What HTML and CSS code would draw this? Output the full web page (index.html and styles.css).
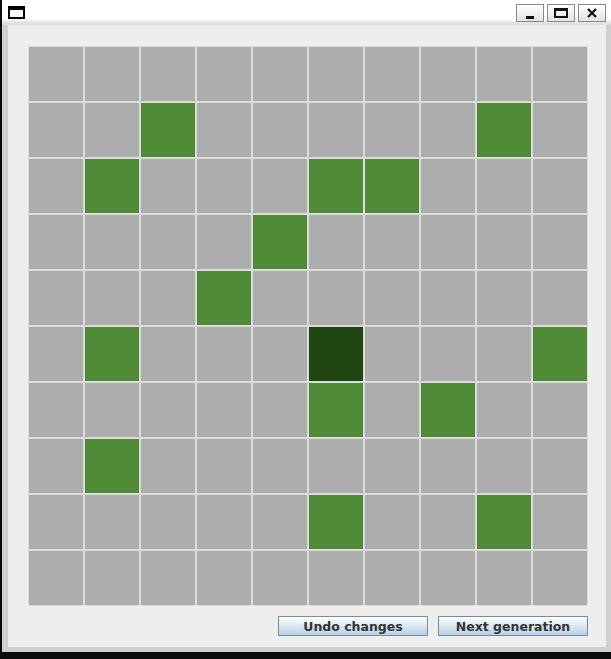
FILE: index.html
```html
<!DOCTYPE html>
<html>
    <head>
        <meta http-equiv="Content-Type" content="text/html; charset=utf-8" />
        <title>Game of Life</title>
        <link rel="stylesheet" href="styles.css">
    </head>
    <body>
        <div class="window">
            <div class="title_bar">
                <div class="win_icon"></div>
                <div class="title_buttons">
                    <div class="tb_button"><span class="ico_min"></span></div>
                    <div class="tb_button"><span class="ico_max"></span></div>
                    <div class="tb_button">
                        <svg width="10" height="10" viewBox="0 0 10 10">
                            <path d="M1 1 L9 9 M9 1 L1 9" stroke="#111" stroke-width="2.2" fill="none"/>
                        </svg>
                    </div>
                </div>
            </div>
            <div class="frame">
                <div class="panel">
                    <div class="board">
                        <!-- row 0 -->
                        <div class="cell"></div><div class="cell"></div><div class="cell"></div><div class="cell"></div><div class="cell"></div><div class="cell"></div><div class="cell"></div><div class="cell"></div><div class="cell"></div><div class="cell"></div>
                        <!-- row 1 -->
                        <div class="cell"></div><div class="cell"></div><div class="cell alive"></div><div class="cell"></div><div class="cell"></div><div class="cell"></div><div class="cell"></div><div class="cell"></div><div class="cell alive"></div><div class="cell"></div>
                        <!-- row 2 -->
                        <div class="cell"></div><div class="cell alive"></div><div class="cell"></div><div class="cell"></div><div class="cell"></div><div class="cell alive"></div><div class="cell alive"></div><div class="cell"></div><div class="cell"></div><div class="cell"></div>
                        <!-- row 3 -->
                        <div class="cell"></div><div class="cell"></div><div class="cell"></div><div class="cell"></div><div class="cell alive"></div><div class="cell"></div><div class="cell"></div><div class="cell"></div><div class="cell"></div><div class="cell"></div>
                        <!-- row 4 -->
                        <div class="cell"></div><div class="cell"></div><div class="cell"></div><div class="cell alive"></div><div class="cell"></div><div class="cell"></div><div class="cell"></div><div class="cell"></div><div class="cell"></div><div class="cell"></div>
                        <!-- row 5 -->
                        <div class="cell"></div><div class="cell alive"></div><div class="cell"></div><div class="cell"></div><div class="cell"></div><div class="cell selected"></div><div class="cell"></div><div class="cell"></div><div class="cell"></div><div class="cell alive"></div>
                        <!-- row 6 -->
                        <div class="cell"></div><div class="cell"></div><div class="cell"></div><div class="cell"></div><div class="cell"></div><div class="cell alive"></div><div class="cell"></div><div class="cell alive"></div><div class="cell"></div><div class="cell"></div>
                        <!-- row 7 -->
                        <div class="cell"></div><div class="cell alive"></div><div class="cell"></div><div class="cell"></div><div class="cell"></div><div class="cell"></div><div class="cell"></div><div class="cell"></div><div class="cell"></div><div class="cell"></div>
                        <!-- row 8 -->
                        <div class="cell"></div><div class="cell"></div><div class="cell"></div><div class="cell"></div><div class="cell"></div><div class="cell alive"></div><div class="cell"></div><div class="cell"></div><div class="cell alive"></div><div class="cell"></div>
                        <!-- row 9 -->
                        <div class="cell"></div><div class="cell"></div><div class="cell"></div><div class="cell"></div><div class="cell"></div><div class="cell"></div><div class="cell"></div><div class="cell"></div><div class="cell"></div><div class="cell"></div>
                    </div>
                    <div class="actions">
                        <button type="button" class="action_button">Undo changes</button>
                        <button type="button" class="action_button">Next generation</button>
                    </div>
                </div>
            </div>
        </div>
    </body>
</html>
```
FILE: styles.css
```css
body {
    margin: 0;
    background: #0c0c0c;
    font-family: "DejaVu Sans", sans-serif;
}
.window {
    margin-left: 2px;
    width: 609px;
    display: flex;
    flex-direction: column;
}
.title_bar {
    height: 25px;
    box-sizing: border-box;
    display: flex;
    align-items: flex-start;
    justify-content: space-between;
    padding: 4px 5px 0 6px;
    background: linear-gradient(#ffffff 0, #ffffff 76%, #e6e6e6 88%, #dadada 100%);
}
.win_icon {
    margin-top: 2px;
    width: 17px;
    height: 13px;
    box-sizing: border-box;
    border: 2px solid #000;
    border-top-width: 4px;
    background: #fff;
}
.title_buttons {
    display: flex;
    gap: 3px;
}
.tb_button {
    width: 28px;
    height: 18px;
    box-sizing: border-box;
    border: 1px solid #8a8a8a;
    background: linear-gradient(#ffffff, #e2e2e2);
    display: flex;
    align-items: center;
    justify-content: center;
}
.ico_min {
    width: 8px;
    height: 3px;
    margin-top: 8px;
    background: #111;
}
.ico_max {
    width: 14px;
    height: 10px;
    box-sizing: border-box;
    border: 2px solid #111;
    border-top-width: 3px;
}
.frame {
    background: #d0d0d0;
    padding: 0 5px 5px 6px;
}
.panel {
    background: #eeeeee;
    height: 622px;
    box-sizing: border-box;
    padding: 21px 18px 0 20px;
}
.board {
    display: grid;
    grid-template-columns: repeat(10, 56px);
    grid-template-rows: repeat(10, 56px);
}
.cell {
    box-sizing: border-box;
    border: 1px solid #dcdcdc;
    background: #adadad;
}
.cell.alive {
    background: #508b37;
}
.cell.selected {
    background: #1e4510;
}
.actions {
    display: flex;
    justify-content: flex-end;
    gap: 10px;
    margin-top: 10px;
}
.action_button {
    width: 150px;
    height: 20px;
    padding: 0;
    box-sizing: border-box;
    border: 1px solid #7a8a99;
    background: linear-gradient(#ffffff, #b8cfe5);
    color: #333333;
    font-family: "DejaVu Sans", sans-serif;
    font-weight: bold;
    font-size: 12.5px;
}
```
